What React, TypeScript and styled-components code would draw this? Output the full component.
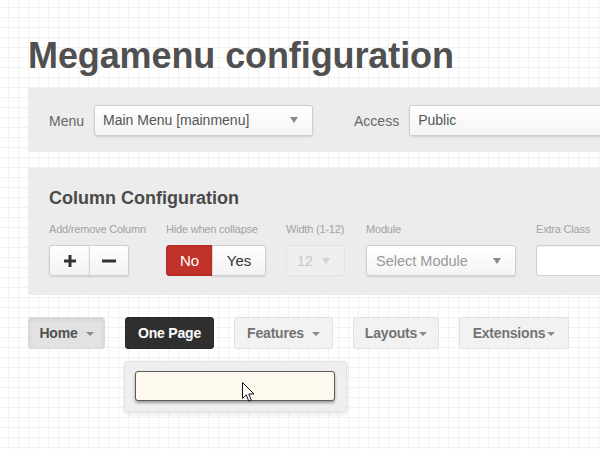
import React from "react";
import styled, { createGlobalStyle } from "styled-components";

const Global = createGlobalStyle`
  html, body {
    margin: 0;
    padding: 0;
    background-color: #ffffff;
    background-image:
      linear-gradient(#f2f2f2 1px, transparent 1px),
      linear-gradient(90deg, #f2f2f2 1px, transparent 1px);
    background-size: 10px 10px;
    background-position: -2px -3px;
    font-family: "Liberation Sans", Arial, sans-serif;
    overflow: hidden;
  }
`;

const Page = styled.div`
  width: 600px;
  height: 450px;
  overflow: hidden;
  padding-left: 28px;
  box-sizing: border-box;
`;

const Title = styled.h1`
  margin: 0;
  padding-top: 36px;
  font-size: 36px;
  line-height: 40px;
  font-weight: bold;
  color: #505050;
  letter-spacing: -0.1px;
  white-space: nowrap;
`;

const Panel = styled.div<{ $mt: number }>`
  margin-top: ${(p) => p.$mt}px;
  width: 620px;
  background: #ececec;
  box-sizing: border-box;
  padding-left: 21px;
`;

const MenuRow = styled.div`
  height: 64px;
  display: flex;
  align-items: center;
`;

const InlineLabel = styled.span<{ $ml?: number }>`
  font-size: 14px;
  color: #666;
  margin-left: ${(p) => p.$ml ?? 0}px;
  margin-right: 10px;
  margin-top: 2px;
`;

const Select = styled.div<{ $w: number; $disabled?: boolean; $muted?: boolean }>`
  width: ${(p) => p.$w}px;
  height: 31px;
  box-sizing: border-box;
  flex-shrink: 0;
  display: flex;
  align-items: center;
  justify-content: space-between;
  padding: 0 14px 0 8px;
  border: 1px solid ${(p) => (p.$disabled ? "#e2e2e2" : "#cfcfcf")};
  border-radius: 3px;
  background: ${(p) =>
    p.$disabled ? "#efefef" : "linear-gradient(#ffffff, #f4f4f4)"};
  box-shadow: ${(p) => (p.$disabled ? "none" : "0 1px 2px rgba(0,0,0,0.12)")};
  font-size: ${(p) => (p.$muted ? 14.5 : 14)}px;
  color: ${(p) => (p.$disabled ? "#c8c8c8" : p.$muted ? "#999" : "#555")};
  white-space: nowrap;
  overflow: hidden;
`;

const Arrow = styled.span<{ $light?: boolean }>`
  width: 0;
  height: 0;
  border-left: 4px solid transparent;
  border-right: 4px solid transparent;
  border-top: 6px solid ${(p) => (p.$light ? "#d2d2d2" : "#8a8a8a")};
`;

const ConfigPanel = styled.div`
  padding: 19px 0 19px 0;
`;

const Heading = styled.h2`
  margin: 0;
  font-size: 18px;
  line-height: 22px;
  font-weight: bold;
  color: #4a4a4a;
`;

const Fields = styled.div`
  margin-top: 13px;
  display: flex;
  gap: 20px;
`;

const Field = styled.div<{ $w: number }>`
  width: ${(p) => p.$w}px;
  flex-shrink: 0;
  display: flex;
  flex-direction: column;
  gap: 9px;
`;

const FieldLabel = styled.div`
  font-size: 11px;
  line-height: 14px;
  color: #a2a2a2;
  white-space: nowrap;
  letter-spacing: -0.2px;
`;

const Group = styled.div`
  display: flex;
  height: 31px;
`;

const GroupBtn = styled.div<{ $w: number; $active?: boolean }>`
  width: ${(p) => p.$w}px;
  height: 31px;
  box-sizing: border-box;
  display: flex;
  align-items: center;
  justify-content: center;
  font-size: 15px;
  color: ${(p) => (p.$active ? "#ffffff" : "#333")};
  background: ${(p) =>
    p.$active ? "#bf3129" : "linear-gradient(#ffffff, #f2f2f2)"};
  border: 1px solid ${(p) => (p.$active ? "#b02c25" : "#cfcfcf")};
  box-shadow: ${(p) => (p.$active ? "none" : "0 1px 2px rgba(0,0,0,0.12)")};
  & + & {
    border-left: 1px solid ${(p) => (p.$active ? "#b02c25" : "#d6d6d6")};
    margin-left: -1px;
  }
  &:first-child {
    border-radius: 3px 0 0 3px;
  }
  &:last-child {
    border-radius: 0 3px 3px 0;
  }
`;

const TextInput = styled.div`
  width: 120px;
  height: 31px;
  box-sizing: border-box;
  background: #fff;
  border: 1px solid #cfcfcf;
  border-radius: 3px 0 0 3px;
  box-shadow: inset 0 1px 2px rgba(0, 0, 0, 0.06);
`;

const Nav = styled.div`
  margin-top: 22px;
  display: flex;
  gap: 20px;
  align-items: flex-start;
`;

const NavItem = styled.div`
  position: relative;
`;

const NavBtn = styled.div<{ $variant: "active" | "dark" | "plain"; $w: number }>`
  width: ${(p) => p.$w}px;
  height: 32px;
  box-sizing: border-box;
  display: flex;
  align-items: center;
  justify-content: center;
  font-size: 14px;
  font-weight: bold;
  letter-spacing: -0.2px;
  border-radius: 3px;
  white-space: nowrap;
  color: ${(p) =>
    p.$variant === "dark" ? "#fff" : p.$variant === "active" ? "#505050" : "#737373"};
  background: ${(p) =>
    p.$variant === "dark" ? "#2f2f2f" : p.$variant === "active" ? "#e2e2e2" : "#f2f2f2"};
  border: 1px solid
    ${(p) =>
      p.$variant === "dark" ? "#2a2a2a" : p.$variant === "active" ? "#dadada" : "#e1e1e1"};
  box-shadow: ${(p) =>
    p.$variant === "active" ? "inset 0 2px 4px rgba(0,0,0,0.08)" : "none"};
`;

const Caret = styled.span<{ $gap: number }>`
  margin-left: ${(p) => p.$gap}px;
  margin-top: 1px;
  width: 0;
  height: 0;
  border-left: 4px solid transparent;
  border-right: 4px solid transparent;
  border-top: 4px solid #8a8a8a;
`;

const Dropdown = styled.div`
  position: absolute;
  top: 44px;
  left: -1px;
  width: 223px;
  height: 51px;
  box-sizing: border-box;
  padding: 9px 12px 0 10px;
  background: #efefef;
  border: 1px solid #e2e2e2;
  border-radius: 3px;
  box-shadow: 0 2px 4px rgba(0, 0, 0, 0.1);
`;

const CreamInput = styled.div`
  position: relative;
  width: 200px;
  height: 30px;
  box-sizing: border-box;
  background: #fdf9ef;
  border: 1px solid #5a5a5a;
  border-radius: 3px;
  box-shadow: 0 2px 3px rgba(0, 0, 0, 0.35);
`;

const Cursor = styled.svg`
  position: absolute;
  left: 106px;
  top: 10px;
`;

const PlusIcon = () => (
  <svg width="12" height="12" viewBox="0 0 12 12">
    <rect x="4.5" y="0" width="3" height="12" fill="#333" />
    <rect x="0" y="4.5" width="12" height="3" fill="#333" />
  </svg>
);

const MinusIcon = () => (
  <svg width="14" height="4" viewBox="0 0 14 4">
    <rect x="0" y="0.5" width="14" height="3" fill="#333" />
  </svg>
);

export default function App() {
  return (
    <Page>
      <Global />
      <Title>Megamenu configuration</Title>

      <Panel $mt={12}>
        <MenuRow>
          <InlineLabel>Menu</InlineLabel>
          <Select $w={219}>
            <span>Main Menu [mainmenu]</span>
            <Arrow />
          </Select>
          <InlineLabel $ml={41}>Access</InlineLabel>
          <Select $w={240}>
            <span>Public</span>
          </Select>
        </MenuRow>
      </Panel>

      <Panel $mt={16}>
        <ConfigPanel>
          <Heading>Column Configuration</Heading>
          <Fields>
            <Field $w={97}>
              <FieldLabel>Add/remove Column</FieldLabel>
              <Group>
                <GroupBtn $w={41}>
                  <PlusIcon />
                </GroupBtn>
                <GroupBtn $w={40}>
                  <MinusIcon />
                </GroupBtn>
              </Group>
            </Field>
            <Field $w={100}>
              <FieldLabel>Hide when collapse</FieldLabel>
              <Group>
                <GroupBtn $w={47} $active>
                  No
                </GroupBtn>
                <GroupBtn $w={54}>Yes</GroupBtn>
              </Group>
            </Field>
            <Field $w={60}>
              <FieldLabel>Width (1-12)</FieldLabel>
              <Select $w={59} $disabled $muted>
                <span style={{ marginLeft: 2 }}>12</span>
                <Arrow $light />
              </Select>
            </Field>
            <Field $w={150}>
              <FieldLabel>Module</FieldLabel>
              <Select $w={150} $muted>
                <span style={{ marginLeft: 1 }}>Select Module</span>
                <Arrow />
              </Select>
            </Field>
            <Field $w={120}>
              <FieldLabel>Extra Class</FieldLabel>
              <TextInput />
            </Field>
          </Fields>
        </ConfigPanel>
      </Panel>

      <Nav>
        <NavItem>
          <NavBtn $variant="active" $w={77}>
            Home
            <Caret $gap={8} />
          </NavBtn>
        </NavItem>
        <NavItem>
          <NavBtn $variant="dark" $w={89}>
            One Page
          </NavBtn>
          <Dropdown>
            <CreamInput>
              <Cursor width="13" height="21" viewBox="0 0 13 21">
                <path
                  d="M0.5 0.5 L0.5 16.5 L4.3 12.9 L6.8 19.2 L9.3 18.2 L6.8 12 L12 12 Z"
                  fill="#ffffff"
                  stroke="#111"
                  strokeWidth="1"
                  strokeLinejoin="miter"
                />
              </Cursor>
            </CreamInput>
          </Dropdown>
        </NavItem>
        <NavItem>
          <NavBtn $variant="plain" $w={99}>
            Features
            <Caret $gap={8} />
          </NavBtn>
        </NavItem>
        <NavItem>
          <NavBtn $variant="plain" $w={86}>
            Layouts
            <Caret $gap={2} />
          </NavBtn>
        </NavItem>
        <NavItem>
          <NavBtn $variant="plain" $w={110}>
            Extensions
            <Caret $gap={2} />
          </NavBtn>
        </NavItem>
      </Nav>
    </Page>
  );
}
